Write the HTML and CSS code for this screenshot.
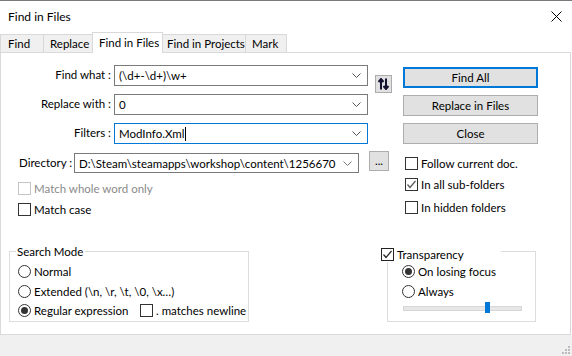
FILE: index.html
```html
<!DOCTYPE html>
<html lang="en">
<head>
    <meta charset="UTF-8">
    <title>Find in Files</title>
    <link rel="stylesheet" href="styles.css">
</head>
<body>
    <div class="window">
        <div class="titlebar">
            <span class="title">Find in Files</span>
            <svg class="close" width="11" height="11" viewBox="0 0 11 11">
                <path d="M0.5 0.5 L10.5 10.5 M10.5 0.5 L0.5 10.5" stroke="#000" stroke-width="1" fill="none"/>
            </svg>
        </div>

        <div class="tabs">
            <div class="tab w-find">Find</div>
            <div class="tab w-replace">Replace</div>
            <div class="tab w-files active">Find in Files</div>
            <div class="tab w-projects">Find in Projects</div>
            <div class="tab w-mark">Mark</div>
        </div>

        <div class="panel">
            <div class="top">
                <div class="form">
                    <div class="fields">
                        <div class="field-grid">
                            <label>Find what :</label>
                            <div class="combo"><span>(\d+-\d+)\w+</span><svg class="chev" width="9" height="5" viewBox="0 0 9 5"><path d="M0.5 0.5 L4.5 4.5 L8.5 0.5" stroke="#555" fill="none"/></svg></div>
                            <label>Replace with :</label>
                            <div class="combo"><span>0</span><svg class="chev" width="9" height="5" viewBox="0 0 9 5"><path d="M0.5 0.5 L4.5 4.5 L8.5 0.5" stroke="#555" fill="none"/></svg></div>
                            <label>Filters :</label>
                            <div class="combo focused"><span>ModInfo.Xml<i class="caret"></i></span><svg class="chev" width="9" height="5" viewBox="0 0 9 5"><path d="M0.5 0.5 L4.5 4.5 L8.5 0.5" stroke="#555" fill="none"/></svg></div>
                        </div>
                        <button class="swap">
                            <svg width="11" height="12" viewBox="0 0 11 12">
                                <path d="M3 11.5 V1.5 M0.5 4 L3 1 L5.5 4" stroke="#141432" stroke-width="2" fill="none"/>
                                <path d="M8 0.5 V10.5 M5.5 8 L8 11 L10.5 8" stroke="#141432" stroke-width="2" fill="none"/>
                            </svg>
                        </button>
                    </div>

                    <div class="dir-row">
                        <label>Directory :</label>
                        <div class="combo dir"><span>D:\Steam\steamapps\workshop\content\1256670</span><svg class="chev" width="9" height="5" viewBox="0 0 9 5"><path d="M0.5 0.5 L4.5 4.5 L8.5 0.5" stroke="#777" fill="none"/></svg></div>
                        <button class="browse">...</button>
                    </div>

                    <div class="check left disabled first"><span class="box"></span>Match whole word only</div>
                    <div class="check left second"><span class="box"></span>Match case</div>
                </div>

                <div class="actions">
                    <button class="btn primary">Find All</button>
                    <button class="btn">Replace in Files</button>
                    <button class="btn">Close</button>

                    <div class="check right r1"><span class="box"></span>Follow current doc.</div>
                    <div class="check right r2"><span class="box checked"><svg width="11" height="11" viewBox="0 0 11 11"><path d="M1.5 5.5 L4 8.5 L9.5 2" stroke="#555" stroke-width="1.2" fill="none"/></svg></span>In all sub-folders</div>
                    <div class="check right r3"><span class="box"></span>In hidden folders</div>
                </div>
            </div>

            <div class="bottom">
                <div class="group search">
                    <div class="legend">Search Mode</div>
                    <div class="radio row1"><span class="dot"></span>Normal</div>
                    <div class="radio row2"><span class="dot"></span>Extended (\n, \r, \t, \0, \x…)</div>
                    <div class="radio row3">
                        <span class="dot on"></span><span class="regex">Regular expression</span><span class="box"></span>. matches newline
                    </div>
                </div>

                <div class="group transp">
                    <div class="legend check-legend"><span class="box"><svg width="11" height="11" viewBox="0 0 11 11"><path d="M1.5 5.5 L4 8.5 L9.5 2" stroke="#222" stroke-width="1.2" fill="none"/></svg></span>Transparency</div>
                    <div class="radio row1"><span class="dot on"></span>On losing focus</div>
                    <div class="radio row2"><span class="dot"></span>Always</div>
                    <div class="slider"><span class="thumb"></span></div>
                </div>
            </div>
        </div>

        <div class="footer">
            <svg class="grip" width="9" height="9" viewBox="0 0 9 9">
                <rect x="6" y="0" width="2" height="2" fill="#bcbcbc"/>
                <rect x="3" y="3" width="2" height="2" fill="#bcbcbc"/>
                <rect x="6" y="3" width="2" height="2" fill="#bcbcbc"/>
                <rect x="0" y="6" width="2" height="2" fill="#bcbcbc"/>
                <rect x="3" y="6" width="2" height="2" fill="#bcbcbc"/>
                <rect x="6" y="6" width="2" height="2" fill="#bcbcbc"/>
            </svg>
        </div>
    </div>
</body>
</html>
```

FILE: styles.css
```css
* {
    box-sizing: border-box;
}

body {
    margin: 0;
    background: #fff;
    font-family: Lato, "Open Sans", sans-serif;
    font-size: 11.5px;
    color: #000;
}

.window {
    width: 572px;
    height: 356px;
    background: #fff;
    overflow: hidden;
}

.titlebar {
    height: 32px;
    border-top: 1px solid #7a7a7a;
    display: flex;
    align-items: center;
    justify-content: space-between;
    padding: 0 10px 0 8px;
}

.title {
    font-size: 12px;
}

/* tabs */
.tabs {
    height: 20px;
    display: flex;
    align-items: flex-end;
}

.tab {
    height: 18px;
    line-height: 17px;
    padding-left: 6px;
    background: #f0f0f0;
    border: 1px solid #d9d9d9;
    border-bottom: none;
    margin-left: -1px;
    white-space: nowrap;
}

.tab.w-find { width: 44px; margin-left: 0; padding-left: 7px; }
.tab.w-replace { width: 50px; }
.tab.w-files { width: 71px; }
.tab.w-projects { width: 84px; padding-left: 4px; }
.tab.w-mark { width: 42px; }

.tab.active {
    height: 21px;
    line-height: 19px;
    background: #fff;
    margin-bottom: -1px;
    position: relative;
    z-index: 1;
}

/* panel */
.panel {
    height: 283px;
    border: 1px solid #d9d9d9;
    width: 571px;
    padding-top: 12px;
}

.top {
    display: flex;
    align-items: flex-start;
}

.form {
    width: 402px;
}

.fields {
    display: flex;
    align-items: flex-start;
}

.field-grid {
    display: grid;
    grid-template-columns: 110px 254px;
    grid-auto-rows: 21px;
    column-gap: 3px;
    row-gap: 8px;
}

.field-grid label {
    text-align: right;
    line-height: 19px;
    white-space: nowrap;
}

.combo {
    height: 21px;
    border: 1px solid #7a7a7a;
    background: #fff;
    display: flex;
    align-items: center;
    justify-content: space-between;
    padding: 0 6px 0 4px;
    white-space: nowrap;
}

.combo.focused {
    border-color: #0078d7;
}

.caret {
    display: inline-block;
    width: 1px;
    height: 14px;
    background: #000;
    vertical-align: -3px;
    margin-left: 1px;
}

.chev {
    flex-shrink: 0;
}

button {
    font-family: inherit;
    font-size: 11.5px;
    color: #000;
    background: #e1e1e1;
    border: 1px solid #adadad;
    padding: 0;
    cursor: pointer;
}

.swap {
    width: 17px;
    height: 18px;
    margin-left: 7px;
    margin-top: 10px;
    display: flex;
    align-items: center;
    justify-content: center;
}

.dir-row {
    display: flex;
    align-items: flex-start;
    margin-top: 9px;
    padding-left: 18px;
}

.dir-row label {
    width: 52px;
    line-height: 20px;
    white-space: nowrap;
}

.combo.dir {
    width: 285px;
    height: 20px;
    margin-left: 3px;
    border-color: #7a7a7a;
}

.browse {
    width: 20px;
    height: 20px;
    margin-left: 10px;
    margin-top: -2px;
    line-height: 14px;
}

/* checkboxes */
.check {
    display: flex;
    align-items: center;
    height: 13px;
    line-height: 13px;
    white-space: nowrap;
}

.box {
    width: 13px;
    height: 13px;
    border: 1px solid #333;
    background: #fff;
    margin-right: 3px;
    flex-shrink: 0;
    display: inline-flex;
    align-items: center;
    justify-content: center;
}

.check.left {
    padding-left: 17px;
}

.check.first {
    margin-top: 9px;
}

.check.second {
    margin-top: 8px;
}

.check.disabled {
    color: #8a8a8a;
}

.check.disabled .box {
    border-color: #c4c4c4;
}

/* right column */
.actions {
    width: 135px;
    margin-top: 2px;
    display: flex;
    flex-direction: column;
}

.btn {
    height: 21px;
    margin-bottom: 7px;
}

.btn.primary {
    border: 2px solid #0078d7;
}

.check.right {
    padding-left: 2px;
}

.check.r1 { margin-top: 6px; }
.check.r2 { margin-top: 8px; }
.check.r3 { margin-top: 10px; }

/* bottom groups */
.bottom {
    display: flex;
    padding-top: 35px;
}

.group {
    position: relative;
    height: 71px;
    border: 1px solid #dcdcdc;
    padding-top: 13px;
}

.group.search {
    width: 240px;
    margin-left: 8px;
    padding-left: 8px;
}

.group.transp {
    width: 149px;
    margin-left: 138px;
    padding-left: 14px;
}

.legend {
    position: absolute;
    top: -8px;
    left: 6px;
    background: #fff;
    padding: 0 2px 0 1px;
    line-height: 15px;
}

.check-legend {
    top: -5px;
    left: -7px;
    width: 120px;
    padding: 0;
    display: flex;
    align-items: center;
}

.check-legend .box {
    border-color: #222;
}

.radio {
    display: flex;
    align-items: center;
    height: 13px;
    white-space: nowrap;
}

.radio.row2 { margin-top: 7px; }
.radio.row3 { margin-top: 6px; }

.regex {
    width: 106px;
}

.dot {
    width: 13px;
    height: 13px;
    border: 1px solid #333;
    border-radius: 50%;
    margin-right: 3px;
    display: inline-flex;
    align-items: center;
    justify-content: center;
    flex-shrink: 0;
}

.dot.on::after {
    content: "";
    width: 7px;
    height: 7px;
    border-radius: 50%;
    background: #333;
}

.slider {
    position: relative;
    width: 119px;
    height: 5px;
    margin-top: 8px;
    margin-left: 1px;
    background: #e7e7e7;
    border: 1px solid #d6d6d6;
}

.thumb {
    position: absolute;
    left: 81px;
    top: -5px;
    width: 5px;
    height: 11px;
    background: #0078d7;
}

/* footer */
.footer {
    height: 21px;
    background: #f0f0f0;
    display: flex;
    justify-content: flex-end;
    align-items: flex-end;
    padding: 0 1px 1px 0;
}
```
